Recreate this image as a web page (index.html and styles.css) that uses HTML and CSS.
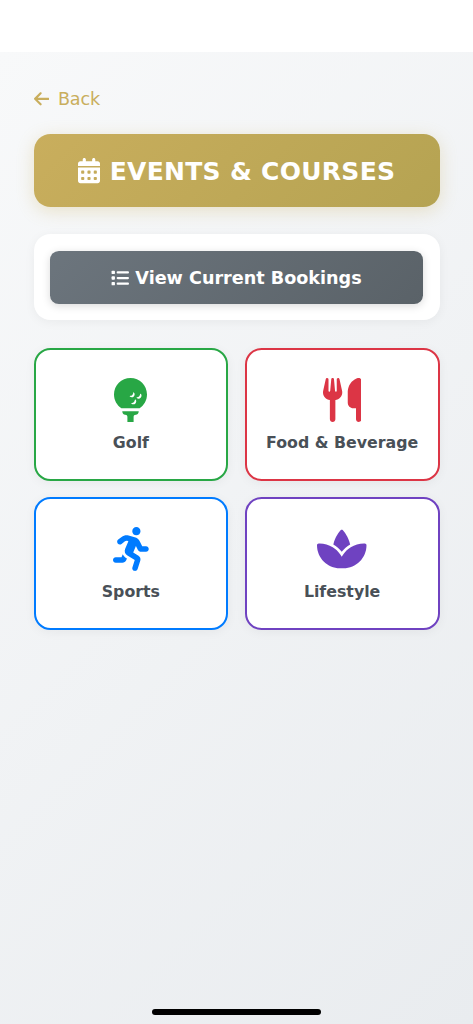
FILE: index.html
```html
<!DOCTYPE html>
<html lang="en">
<head>
<meta charset="utf-8">
<title>Events &amp; Courses</title>
<link rel="stylesheet" href="styles.css">
</head>
<body>
<div class="status-bar"></div>
<main class="page">
  <a class="back"><svg class="back-icon" viewBox="0 0 448 512"><path d="M9.4 233.4c-12.500 12.500-12.500 32.800 0 45.300l160 160c12.500 12.500 32.800 12.500 45.300 0s12.500-32.800 0-45.300L109.200 288 416 288c17.700 0 32-14.300 32-32s-14.300-32-32-32l-306.700 0L214.600 118.600c12.500-12.500 12.500-32.800 0-45.300s-32.800-12.500-45.300 0l-160 160z"/></svg><span>Back</span></a>
  <h1 class="title"><svg class="title-icon" viewBox="0 0 448 512"><path d="M128 0c17.700 0 32 14.300 32 32V64H288V32c0-17.700 14.300-32 32-32s32 14.300 32 32V64h48c26.500 0 48 21.500 48 48v48H0V112C0 85.500 21.500 64 48 64H96V32c0-17.700 14.300-32 32-32zM0 192H448V464c0 26.500-21.500 48-48 48H48c-26.500 0-48-21.500-48-48V192zm64 80v32c0 8.800 7.200 16 16 16h32c8.800 0 16-7.200 16-16V272c0-8.800-7.200-16-16-16H80c-8.800 0-16 7.200-16 16zm128 0v32c0 8.800 7.200 16 16 16h32c8.800 0 16-7.200 16-16V272c0-8.800-7.200-16-16-16H208c-8.800 0-16 7.200-16 16zm144-16c-8.800 0-16 7.200-16 16v32c0 8.800 7.200 16 16 16h32c8.800 0 16-7.200 16-16V272c0-8.800-7.200-16-16-16H336zM64 400v32c0 8.800 7.200 16 16 16h32c8.800 0 16-7.200 16-16V400c0-8.800-7.200-16-16-16H80c-8.800 0-16 7.200-16 16zm144-16c-8.800 0-16 7.200-16 16v32c0 8.800 7.200 16 16 16h32c8.800 0 16-7.200 16-16V400c0-8.800-7.200-16-16-16H208zm112 16v32c0 8.800 7.200 16 16 16h32c8.800 0 16-7.200 16-16V400c0-8.800-7.200-16-16-16H336c-8.800 0-16 7.200-16 16z"/></svg><span>EVENTS &amp; COURSES</span></h1>
  <section class="panel">
    <button class="bookings"><svg class="list-icon" viewBox="0 0 512 512"><rect x="16" y="48" width="96" height="96" rx="24"/><rect x="16" y="208" width="96" height="96" rx="24"/><rect x="16" y="368" width="96" height="96" rx="24"/><rect x="160" y="64" width="352" height="64" rx="32"/><rect x="160" y="224" width="352" height="64" rx="32"/><rect x="160" y="384" width="352" height="64" rx="32"/></svg><span>View Current Bookings</span></button>
  </section>
  <nav class="grid">
    <a class="card golf"><svg class="card-icon" viewBox="0 0 384 512"><path d="M384 192c0 66.800-34.100 125.600-85.800 160H85.800C34.100 317.600 0 258.800 0 192C0 86 86 0 192 0S384 86 384 192zM242.100 256.600c0 18.500-15 33.500-33.500 33.500c-4.900 0-9.100 5.100-5.400 8.400c5.900 5.200 13.700 8.400 22.100 8.400c18.500 0 33.500-15 33.500-33.500c0-8.500-3.200-16.200-8.400-22.100c-3.300-3.700-8.400 .5-8.400 5.400zm-52.300-49.300c-4.900 0-9.100 5.100-5.400 8.400c5.900 5.200 13.700 8.400 22.100 8.400c18.500 0 33.500-15 33.500-33.500c0-8.500-3.200-16.200-8.400-22.100c-3.300-3.700-8.400 .5-8.400 5.400c0 18.500-15 33.500-33.500 33.500zm113.500-17.500c0 18.500-15 33.500-33.500 33.500c-4.900 0-9.100 5.100-5.400 8.400c5.900 5.200 13.700 8.400 22.100 8.400c18.500 0 33.500-15 33.500-33.500c0-8.500-3.200-16.200-8.400-22.100c-3.300-3.700-8.400 .5-8.400 5.400zM96 386H288c0 22-14 42-34 42-16 0-26 10-26 26v58H156v-58c0-16-10-26-26-26-20 0-34-20-34-42z"/></svg><span>Golf</span></a>
    <a class="card food"><svg class="card-icon" viewBox="0 0 448 512"><path d="M416 0C400 0 288 32 288 176V288c0 35.300 28.700 64 64 64h32V480c0 17.700 14.300 32 32 32s32-14.300 32-32V32c0-17.700-14.300-32-32-32zM64 16C64 7.800 57.900 1 49.700 .1S34.200 4.600 32.400 12.500L2.100 148.800C.7 155.100 0 161.500 0 167.900c0 45.900 35.100 83.600 80 87.700V480c0 17.700 14.300 32 32 32s32-14.300 32-32V255.600c44.900-4.100 80-41.800 80-87.700c0-6.400-.7-12.800-2.100-19.100L191.600 12.500c-1.800-8-9.300-13.300-17.400-12.400S160 7.800 160 16V150.200c0 5.400-4.400 9.800-9.800 9.800c-5.100 0-9.300-3.900-9.800-9L127.900 14.600C127.200 6.300 120.300 0 112 0s-15.200 6.300-15.900 14.600L83.700 151c-.5 5.100-4.700 9-9.800 9c-5.400 0-9.800-4.400-9.800-9.800V16z"/></svg><span>Food &amp; Beverage</span></a>
    <a class="card sports"><svg class="card-icon" viewBox="0 0 416 512"><path d="M272 96c26.510 0 48-21.490 48-48S298.510 0 272 0s-48 21.490-48 48 21.490 48 48 48zM113.690 317.470l-14.800 34.520H32c-17.670 0-32 14.330-32 32s14.330 32 32 32h77.450c19.250 0 36.580-11.440 44.110-29.090l8.790-20.520-10.670-6.300c-17.320-10.230-30.060-25.370-37.990-42.610zM384 223.990h-44.030l-26.060-53.250c-12.500-25.550-35.450-44.230-61.780-50.940l-71.080-21.140c-28.300-6.800-57.770-.55-80.840 17.140l-39.670 30.410c-14.030 10.750-16.690 30.830-5.940 44.860s30.840 16.690 44.860 5.940l39.690-30.410c7.670-5.890 17.440-8 25.270-6.140l14.700 4.370-37.460 87.390c-12.620 29.480-1.310 64.010 26.300 80.310l84.980 50.170-27.470 87.730c-5.280 16.860 4.110 34.820 20.970 40.090 3.190 1 6.410 1.480 9.580 1.480 13.610 0 26.230-8.770 30.520-22.450l31.640-101.060c5.910-20.770-2.890-43.080-21.640-54.390l-61.240-36.140 31.310-78.280 20.270 41.430c8 16.340 24.920 26.890 43.110 26.890H384c17.670 0 32-14.330 32-32s-14.330-31.990-32-31.990z"/></svg><span>Sports</span></a>
    <a class="card lifestyle"><svg class="card-icon" viewBox="0 0 576 512"><path d="M183.100 235.300c33.700 20.700 62.900 48.100 85.800 80.500c7 9.900 13.400 20.300 19.100 31c5.700-10.800 12.100-21.100 19.100-31c22.900-32.400 52.100-59.800 85.800-80.500C437.600 207.800 490.100 192 546 192h9.900c11.100 0 20.100 9 20.100 20.100C576 360.100 456.100 480 308.100 480H267.900C119.900 480 0 360.100 0 212.100C0 201 9 192 20.100 192H30c55.900 0 108.400 15.800 153.100 43.300zM301.500 37.600c15.700 16.900 61.100 71.800 84.400 164.600c-38 21.600-71.400 50.800-97.900 85.600c-26.500-34.800-59.900-63.900-97.900-85.600c23.200-92.800 68.600-147.700 84.400-164.600C278 33.900 282.900 32 288 32s10 1.900 13.500 5.600z"/></svg><span>Lifestyle</span></a>
  </nav>
</main>
<div class="home-indicator"></div>
</body>
</html>
```
FILE: styles.css
```css
* { box-sizing: border-box; }

body {
  margin: 0;
  height: 1024px;
  display: flex;
  flex-direction: column;
  font-family: Verdana, "DejaVu Sans", sans-serif;
  background: #fff;
}

svg { fill: currentColor; flex: none; }

.status-bar { height: 52px; flex: none; }

.page {
  flex: 1;
  padding: 33px 33.5px 0;
  background: linear-gradient(135deg, #f8f9fa 0%, #e9ecef 100%);
}

.back {
  display: flex;
  align-items: center;
  gap: 9px;
  height: 28px;
  font-size: 17.6px;
  letter-spacing: -0.1px;
  color: #c9ae5d;
}

.back-icon { width: 15.4px; height: 17.6px; }

.title {
  display: flex;
  align-items: center;
  justify-content: center;
  gap: 10px;
  height: 72.5px;
  margin: 21.3px 0 0;
  padding-top: 1px;
  border-radius: 16.5px;
  font-size: 25px;
  letter-spacing: 0.3px;
  color: #fff;
  white-space: nowrap;
  background: linear-gradient(135deg, #c9ae5d, #b5a352);
  box-shadow: 0 4px 17px rgba(201, 174, 93, 0.3);
}

.title-icon { width: 22px; height: 25.2px; }

.panel {
  height: 86px;
  margin-top: 27.7px;
  padding: 16.5px;
  border-radius: 16.5px;
  background: #fff;
  box-shadow: 0 2px 11px rgba(0, 0, 0, 0.05);
}

.bookings {
  display: flex;
  align-items: center;
  justify-content: center;
  gap: 6px;
  width: 100%;
  height: 53px;
  padding: 1px 0 0;
  border: 0;
  border-radius: 8.8px;
  font: bold 17.6px Verdana, "DejaVu Sans", sans-serif;
  color: #fff;
  background: linear-gradient(135deg, #6c757d, #5a6268);
  box-shadow: 0 2px 9px rgba(0, 0, 0, 0.15);
}

.list-icon { width: 18px; height: 18px; }

.grid {
  display: grid;
  grid-template-columns: 1fr 1fr;
  grid-auto-rows: 132.5px;
  gap: 16.5px;
  margin-top: 28px;
}

.card {
  display: flex;
  flex-direction: column;
  align-items: center;
  padding-top: 27.2px;
  border: 2.2px solid;
  border-radius: 16.5px;
  background: #fff;
  box-shadow: 0 2px 11px rgba(0, 0, 0, 0.05);
}

.card-icon { height: 44px; }

.card span {
  margin-top: 11.4px;
  font-size: 15.8px;
  line-height: 20px;
  font-weight: bold;
  color: #495057;
}

.golf { color: #28a745; }
.food { color: #dc3545; }
.sports { color: #007bff; }
.lifestyle { color: #6f42c1; }

.home-indicator {
  position: absolute;
  left: 152px;
  top: 1009px;
  width: 169px;
  height: 5.5px;
  border-radius: 3px;
  background: #000;
}
```
